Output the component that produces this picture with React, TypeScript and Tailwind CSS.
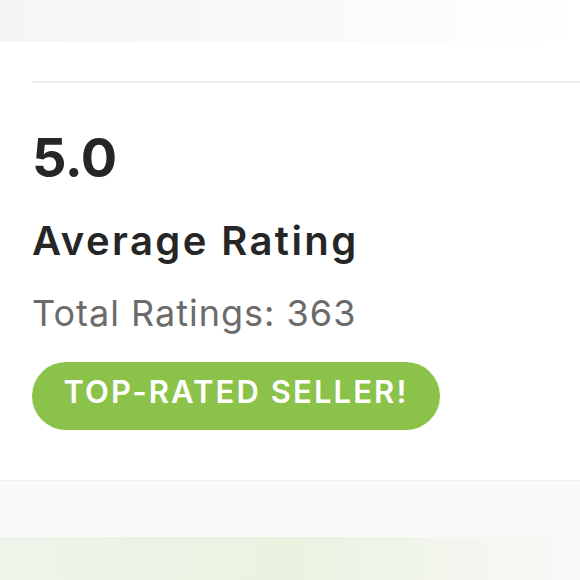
export default function App() {
  return (
    <div className="w-[580px] h-[580px] overflow-hidden bg-white font-['Inter','Liberation_Sans',sans-serif]">
      <div className="h-[42px] bg-gradient-to-r from-[#f5f5f5] via-[#f9f9f7] to-white" />
      <div className="pl-8 pt-[39px] border-b border-[#f1f1ec] h-[439px]">
        <div className="h-[2px] bg-[#efefef]" />
        <div className="pt-[48px] text-[54px] leading-[54px] font-bold text-[#262626] tracking-[-0.5px]">
          5.0
        </div>
        <div className="mt-[36px] text-[40px] leading-[40px] font-semibold text-[#262626] tracking-[2.4px]">
          Average Rating
        </div>
        <div className="mt-[34px] text-[36px] leading-[36px] text-[#6b6b6b] tracking-[1px]">
          Total Ratings: 363
        </div>
        <div className="mt-[31px] w-[408px] h-[68px] pb-2 rounded-full bg-[#8bc34a] flex items-center justify-center">
          <span className="text-[31px] font-semibold text-white tracking-[2.1px]">
            TOP-RATED SELLER!
          </span>
        </div>
      </div>
      <div className="h-[56px] bg-[#fafafa]" />
      <div className="h-[43px] bg-gradient-to-r from-[#eef4ea] via-[#eaf2e0] to-[#f9f9f8]" />
    </div>
  );
}
